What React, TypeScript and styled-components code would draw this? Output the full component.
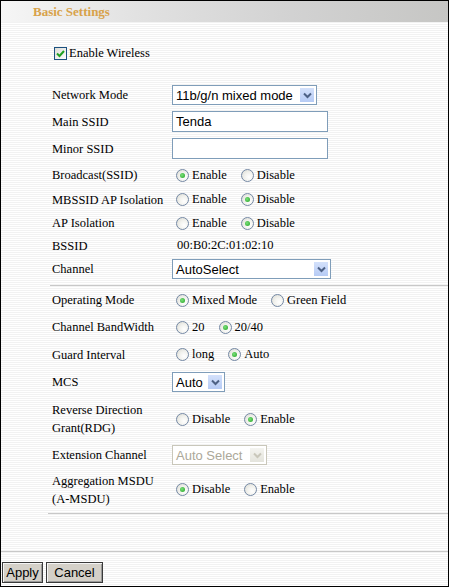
import React from "react";
import styled, { createGlobalStyle, css } from "styled-components";

const GlobalStyle = createGlobalStyle`
  html, body {
    margin: 0;
    padding: 0;
    background: #fff;
  }
  body {
    font-family: "Liberation Serif", "Times New Roman", serif;
    font-size: 12.5px;
    color: #000;
  }
`;

const Frame = styled.div`
  width: 449px;
  height: 587px;
  box-sizing: border-box;
  border: 1px solid #000;
  display: flex;
  flex-direction: column;
  background: repeating-linear-gradient(
    to bottom,
    #ffffff 0px,
    #ffffff 1px,
    #f2f2f2 1px,
    #f2f2f2 2px
  );
`;

const Header = styled.div`
  height: 21px;
  display: flex;
  align-items: center;
  padding-left: 32px;
  background: linear-gradient(to right, #f6f6f6 0%, #e2e2e2 30%, #d2d2d2 65%, #c6c6c4 100%);
`;

const Title = styled.span`
  font-family: "Liberation Serif", serif;
  font-weight: bold;
  font-size: 13px;
  color: #d8a24a;
`;

const CheckRow = styled.label`
  height: 20px;
  margin: 21px 0 19px 53px;
  display: flex;
  align-items: center;
  gap: 2px;
`;

const CheckBox = styled.span`
  width: 11px;
  height: 11px;
  border: 1px solid #1c5180;
  background: linear-gradient(135deg, #dcdcd6, #fff);
  display: inline-flex;
  align-items: center;
  justify-content: center;
`;

const Form = styled.div`
  display: flex;
  flex-direction: column;
`;

const Row = styled.div<{ $h: number }>`
  height: ${(p) => p.$h}px;
  display: flex;
  align-items: center;
  padding-left: 51px;
`;

const Label = styled.div`
  width: 120px;
  flex: none;
  line-height: 18px;
`;

const Field = styled.div`
  display: flex;
  align-items: center;
`;

const Rule = styled.div<{ $indent: number; $top: number }>`
  height: 1px;
  background: #c8c8c8;
  margin-left: ${(p) => p.$indent}px;
  margin-top: ${(p) => p.$top}px;
`;

const inputText = css`
  font-family: "Liberation Sans", Arial, sans-serif;
  font-size: 13px;
`;

const TextBox = styled.div`
  ${inputText};
  width: 151px;
  height: 19px;
  border: 1px solid #7f9db9;
  background: #fff;
  display: flex;
  align-items: center;
  padding-left: 3px;
  box-sizing: content-box;
`;

const SelectBox = styled.div<{ $w: number; $disabled?: boolean }>`
  ${inputText};
  width: ${(p) => p.$w}px;
  height: 20px;
  box-sizing: border-box;
  border: 1px solid ${(p) => (p.$disabled ? "#c9c7ba" : "#7f9db9")};
  background: #fff;
  color: ${(p) => (p.$disabled ? "#aca899" : "#000")};
  display: flex;
  align-items: center;
  justify-content: space-between;
  padding: 1px 1px 1px 3px;
`;

const Arrow = styled.span<{ $disabled?: boolean }>`
  width: 16px;
  height: 16px;
  box-sizing: border-box;
  border: 1px solid #fff;
  background: ${(p) =>
    p.$disabled
      ? "linear-gradient(#f4f4f0, #e4e4dc)"
      : "linear-gradient(#d4e1fb, #b6cbf5)"};
  display: inline-flex;
  align-items: center;
  justify-content: center;
`;

const Value = styled.span`
  white-space: nowrap;
`;

const Option = styled.label<{ $gap?: number }>`
  display: inline-flex;
  align-items: center;
  margin-right: ${(p) => p.$gap ?? 10}px;
  white-space: nowrap;
`;

const RadioDot = styled.span<{ $on?: boolean }>`
  width: 11px;
  height: 11px;
  border-radius: 50%;
  border: 1px solid #7488a4;
  background: radial-gradient(circle at 65% 65%, #fff 0%, #f2f2ee 45%, #d8d8d0 100%);
  margin: 0 3px 0 4px;
  display: inline-flex;
  align-items: center;
  justify-content: center;

  &::after {
    content: "";
    width: 5px;
    height: 5px;
    border-radius: 50%;
    background: ${(p) => (p.$on ? "radial-gradient(circle at 40% 40%, #7be07b, #21a121)" : "transparent")};
  }
`;

const Footer = styled.div`
  margin-top: auto;
  margin-bottom: 3px;
  display: flex;
  flex-direction: column;
`;

const ButtonBar = styled.div`
  display: flex;
  gap: 3px;
  padding: 10px 0 0 1px;
`;

const Button = styled.button<{ $w: number }>`
  width: ${(p) => p.$w}px;
  height: 21px;
  padding: 0;
  font-family: "Liberation Sans", Arial, sans-serif;
  font-size: 13px;
  color: #000;
  background: #d4d0c8;
  border: 1px solid #3a3a3a;
  box-shadow: inset 1px 1px 0 #f4f4f4, inset -1px -1px 0 #9a9a9a;
`;

const Chevron = ({ color }: { color: string }) => (
  <svg width="9" height="7" viewBox="0 0 9 7">
    <path d="M1 1.5 L4.5 5 L8 1.5" fill="none" stroke={color} strokeWidth="2" />
  </svg>
);

const Select = ({ w, value, disabled }: { w: number; value: string; disabled?: boolean }) => (
  <SelectBox $w={w} $disabled={disabled}>
    <Value>{value}</Value>
    <Arrow $disabled={disabled}>
      <Chevron color={disabled ? "#c9c7ba" : "#4d6185"} />
    </Arrow>
  </SelectBox>
);

type Choice = { text: string; on?: boolean };

const Radios = ({ items }: { items: Choice[] }) => (
  <Field>
    {items.map((c) => (
      <Option key={c.text}>
        <RadioDot $on={c.on} />
        {c.text}
      </Option>
    ))}
  </Field>
);

export default function App() {
  return (
    <>
      <GlobalStyle />
      <Frame>
        <Header>
          <Title>Basic Settings</Title>
        </Header>

        <CheckRow>
          <CheckBox>
            <svg width="9" height="9" viewBox="0 0 9 9">
              <path d="M1 4.5 L3.5 7 L8 2" fill="none" stroke="#21a121" strokeWidth="2" />
            </svg>
          </CheckBox>
          Enable Wireless
        </CheckRow>

        <Form>
          <Row $h={26}>
            <Label>Network Mode</Label>
            <Select w={145} value="11b/g/n mixed mode" />
          </Row>
          <Row $h={27}>
            <Label>Main SSID</Label>
            <TextBox>Tenda</TextBox>
          </Row>
          <Row $h={27}>
            <Label>Minor SSID</Label>
            <TextBox />
          </Row>
          <Row $h={26}>
            <Label>Broadcast(SSID)</Label>
            <Radios items={[{ text: "Enable", on: true }, { text: "Disable" }]} />
          </Row>
          <Row $h={23}>
            <Label>MBSSID AP Isolation</Label>
            <Radios items={[{ text: "Enable" }, { text: "Disable", on: true }]} />
          </Row>
          <Row $h={24}>
            <Label>AP Isolation</Label>
            <Radios items={[{ text: "Enable" }, { text: "Disable", on: true }]} />
          </Row>
          <Row $h={21}>
            <Label>BSSID</Label>
            <Field style={{ paddingLeft: 5 }}>00:B0:2C:01:02:10</Field>
          </Row>
          <Row $h={26}>
            <Label>Channel</Label>
            <Select w={159} value="AutoSelect" />
          </Row>

          <Rule $indent={49} $top={3} />

          <Row $h={28}>
            <Label>Operating Mode</Label>
            <Radios items={[{ text: "Mixed Mode", on: true }, { text: "Green Field" }]} />
          </Row>
          <Row $h={26}>
            <Label>Channel BandWidth</Label>
            <Radios items={[{ text: "20" }, { text: "20/40", on: true }]} />
          </Row>
          <Row $h={29}>
            <Label>Guard Interval</Label>
            <Radios items={[{ text: "long" }, { text: "Auto", on: true }]} />
          </Row>
          <Row $h={26}>
            <Label>MCS</Label>
            <Select w={53} value="Auto" />
          </Row>
          <Row $h={48}>
            <Label>
              Reverse Direction
              <br />
              Grant(RDG)
            </Label>
            <Radios items={[{ text: "Disable" }, { text: "Enable", on: true }]} />
          </Row>
          <Row $h={24}>
            <Label>Extension Channel</Label>
            <Select w={95} value="Auto Select" disabled />
          </Row>
          <Row $h={45}>
            <Label>
              Aggregation MSDU
              <br />
              (A-MSDU)
            </Label>
            <Radios items={[{ text: "Disable", on: true }, { text: "Enable" }]} />
          </Row>

          <Rule $indent={47} $top={1} />
        </Form>

        <Footer>
          <Rule $indent={0} $top={0} />
          <ButtonBar>
            <Button $w={41}>Apply</Button>
            <Button $w={57}>Cancel</Button>
          </ButtonBar>
        </Footer>
      </Frame>
    </>
  );
}
